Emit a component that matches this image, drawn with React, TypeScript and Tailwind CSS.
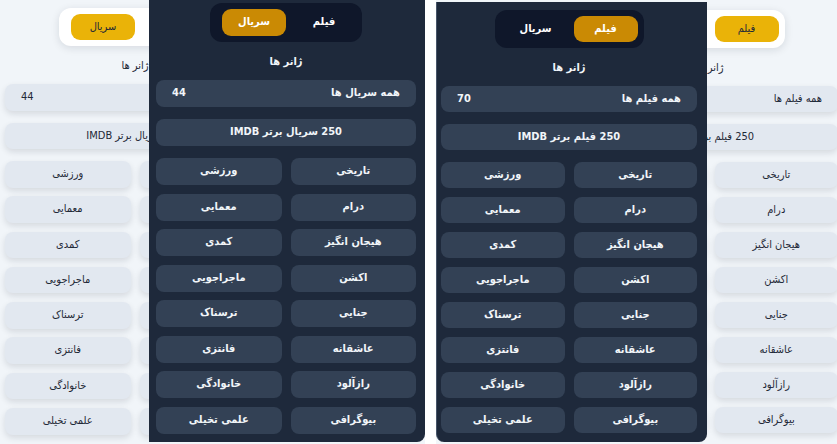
import React from 'react';

type Theme = 'dark' | 'light';
type Kind = 'film' | 'serial';

const genres = [
  'تاریخی',
  'ورزشی',
  'درام',
  'معمایی',
  'هیجان انگیز',
  'کمدی',
  'اکشن',
  'ماجراجویی',
  'جنایی',
  'ترسناک',
  'عاشقانه',
  'فانتزی',
  'رازآلود',
  'خانوادگی',
  'بیوگرافی',
  'علمی تخیلی',
];

interface GenrePageProps {
  theme: Theme;
  kind: Kind;
  className?: string;
  toggleClass: string;
  rowClass: string;
  gridClass: string;
}

const GenrePage: React.FC<GenrePageProps> = ({
  theme,
  kind,
  className = '',
  toggleClass,
  rowClass,
  gridClass,
}) => {
  const dark = theme === 'dark';
  const label = kind === 'film' ? 'فیلم' : 'سریال';
  const count = kind === 'film' ? 70 : 44;

  const tabs: { key: Kind; title: string }[] = [
    { key: 'film', title: 'فیلم' },
    { key: 'serial', title: 'سریال' },
  ];

  const rowBg = dark
    ? 'bg-[#334155] text-[#f1f5f9] font-bold'
    : 'bg-[#e2e8f0] text-[#1f2937] font-medium shadow-[0_3px_6px_rgba(15,23,42,0.12)]';

  return (
    <div dir="rtl" className={`flex shrink-0 flex-col ${className}`}>
      <div
        className={`mx-auto flex gap-1.5 rounded-xl p-1.5 ${toggleClass} ${
          dark ? 'bg-[#0f172a]' : 'bg-white shadow-[0_2px_8px_rgba(15,23,42,0.12)]'
        }`}
      >
        {tabs.map((tab) => {
          const active = tab.key === kind;
          return (
            <div
              key={tab.key}
              className={`flex h-full w-16 items-center justify-center rounded-[9px] text-[11px] ${
                active
                  ? dark
                    ? 'bg-[#ca8a04] font-bold text-white'
                    : 'bg-[#eab308] font-medium text-[#1f2937]'
                  : dark
                  ? 'font-bold text-white'
                  : 'font-medium text-[#374151]'
              }`}
            >
              {tab.title}
            </div>
          );
        })}
      </div>

      <h3
        className={`mt-[11px] mb-[9px] flex h-[18px] items-center justify-center text-[11px] ${
          dark ? 'font-bold text-[#f1f5f9]' : 'font-medium text-[#1f2937]'
        }`}
      >
        ژانر ها
      </h3>

      <div
        className={`flex items-center justify-between rounded-lg px-4 text-[11px] ${rowClass} ${rowBg}`}
      >
        <span>همه {label} ها</span>
        <span>{count}</span>
      </div>

      <div
        className={`mt-3 flex items-center justify-center rounded-lg text-[11px] ${rowClass} ${rowBg}`}
      >
        250 {label} برتر IMDB
      </div>

      <div className={`mt-3 grid grid-cols-2 gap-x-[9px] ${gridClass}`}>
        {genres.map((genre) => (
          <div
            key={genre}
            className={`flex items-center justify-center rounded-lg text-[11px] ${rowClass} ${rowBg}`}
          >
            {genre}
          </div>
        ))}
      </div>
    </div>
  );
};

export default function App() {
  return (
    <div
      className="flex h-[444px] w-[837px] overflow-hidden bg-[#f1f5f9]"
      style={{ fontFamily: '"DejaVu Sans Condensed", "DejaVu Sans", "Liberation Sans", sans-serif' }}
    >
      {/* light serial page, mostly covered */}
      <div className="w-[149px] shrink-0 overflow-hidden">
        <GenrePage
          theme="light"
          kind="serial"
          className="-ml-[3px] w-[276px] px-2 pt-2"
          toggleClass="h-[38px] w-[152px]"
          rowClass="h-[26.5px]"
          gridClass="gap-y-[8.8px]"
        />
      </div>

      {/* dark serial page */}
      <div className="h-[442px] w-[276px] shrink-0 overflow-hidden rounded-br-lg bg-[#1e293b]">
        <GenrePage
          theme="dark"
          kind="serial"
          className="w-[276px] pt-[3px] pr-[9px] pl-[7px]"
          toggleClass="h-[39px] w-[152px]"
          rowClass="h-[27px]"
          gridClass="gap-y-[8.5px]"
        />
      </div>

      <div className="w-[11px] shrink-0 bg-white" />

      {/* dark film page */}
      <div className="mt-[2px] h-[440px] w-[271px] shrink-0 overflow-hidden rounded-b-lg border-l border-[#475569] bg-[#1e293b]">
        <GenrePage
          theme="dark"
          kind="film"
          className="w-[270px] pt-2 pr-[10px] pl-[4px]"
          toggleClass="h-[38px] w-[149px]"
          rowClass="h-[26px]"
          gridClass="gap-y-[9px]"
        />
      </div>

      {/* light film page, mostly covered */}
      <div className="w-[130px] shrink-0 overflow-hidden">
        <GenrePage
          theme="light"
          kind="film"
          className="-ml-[135px] w-[276px] px-[10px] pt-[10px]"
          toggleClass="h-[38px] w-[149px]"
          rowClass="h-[26px]"
          gridClass="gap-y-[9px]"
        />
      </div>
    </div>
  );
}
